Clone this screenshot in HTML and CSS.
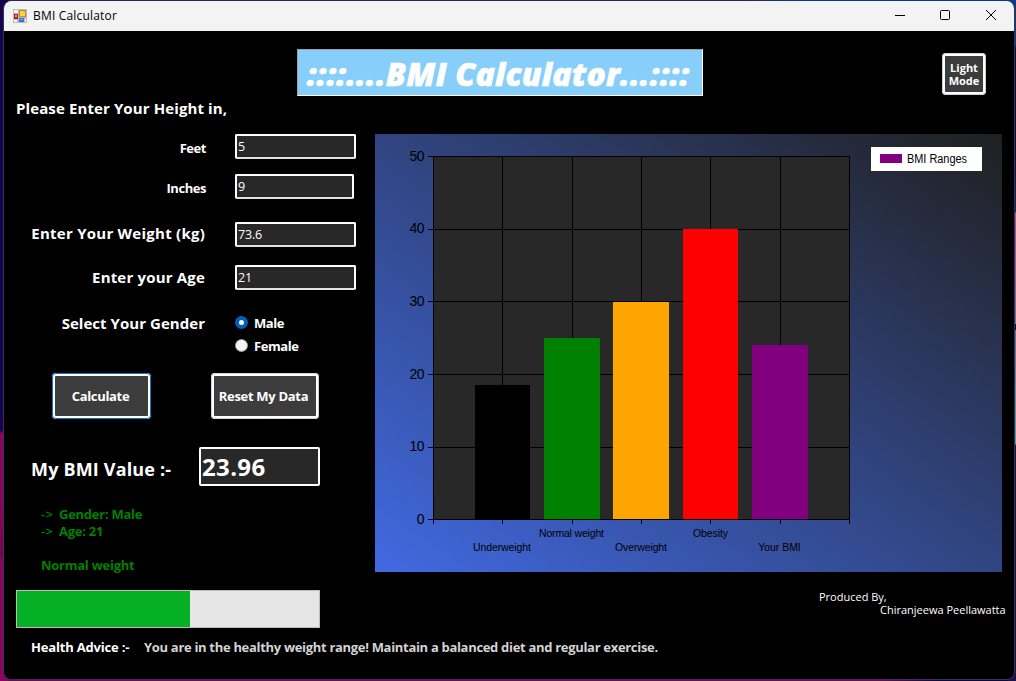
FILE: index.html
```html
<!DOCTYPE html>
<html lang="en">
<head>
<meta charset="utf-8">
<title>BMI Calculator</title>
<link rel="stylesheet" href="styles.css">
</head>
<body>
<div class="window">
  <header class="titlebar">
    <svg class="app-icon" width="14" height="14" viewBox="0 0 14 14">
      <rect width="14" height="14" fill="#b9bcc0"/>
      <path d="M1 1h4v3H1zM1 11h3v2H1zM12 10h1v3h-1z" fill="#f4f4f4"/>
      <rect x="6" y="1" width="7" height="7" fill="#c88a10"/>
      <rect x="7" y="2" width="5" height="5" fill="#fbd04e"/>
      <rect x="1" y="5" width="4" height="5" fill="#b51a14"/>
      <rect x="2" y="6" width="2" height="2" fill="#f0a09a"/>
      <rect x="6" y="9" width="5" height="4" fill="#2e6fd8"/>
      <rect x="7" y="10" width="3" height="1" fill="#7fb0f4"/>
    </svg>
    <span class="caption">BMI Calculator</span>
    <svg class="controls" width="104" height="12" viewBox="0 0 104 12" fill="none" stroke="#000">
      <path d="M0 6.500h10"/>
      <rect x="45.500" y="1.500" width="9" height="9" rx="1"/>
      <path d="M91 1l10 10M101 1l-10 10"/>
    </svg>
  </header>
  <main class="client">
    <section class="top">
      <h1 class="banner"><span>::::....BMI Calculator...::::</span></h1>
      <button class="btn btn-mode">Light<br>Mode</button>
    </section>
    <p class="intro label"><span>Please Enter Your Height in,</span></p>
    <div class="body">
      <section class="form">
        <div class="row row-feet"><label class="small">Feet</label><input class="field" value="5"></div>
        <div class="row row-inches"><label class="small">Inches</label><input class="field field-inches" value="9"></div>
        <div class="row row-weight"><label class="label">Enter Your Weight (kg)</label><input class="field" value="73.6"></div>
        <div class="row row-age"><label class="label">Enter your Age</label><input class="field" value="21"></div>
        <div class="row row-gender">
          <span class="label">Select Your Gender</span>
          <div class="radios">
            <div class="radio"><i class="dot dot-on"></i><span>Male</span></div>
            <div class="radio"><i class="dot"></i><span>Female</span></div>
          </div>
        </div>
        <div class="actions">
          <button class="btn btn-calc">Calculate</button>
          <button class="btn btn-reset">Reset My Data</button>
        </div>
        <div class="result"><span class="result-label">My BMI Value :-</span><input class="result-field" value="23.96"></div>
        <div class="summary"><span class="arrow">-&gt;</span>Gender: Male<br><span class="arrow">-&gt;</span>Age: 21<br><br>Normal weight</div>
        <div class="progress"><div class="progress-bar"></div></div>
      </section>
      <section class="side">
        <svg class="chart" width="627" height="438" viewBox="0 0 627 438">
          <defs>
            <linearGradient id="bg" gradientUnits="userSpaceOnUse" x1="108" y1="513" x2="519" y2="-75">
              <stop offset="0" stop-color="#4169e1"/><stop offset="1" stop-color="#202020"/>
            </linearGradient>
          </defs>
          <rect width="627" height="438" fill="url(#bg)"/>
          <rect x="58" y="22" width="417" height="364" fill="#282828"/>
          <path class="grid" d="M53 22.500H475M53 95.500H475M53 167.500H475M53 240.500H475M53 313.500H475M53 385.500H475M58.500 22V390M127.500 22V390M197.500 22V390M266.500 22V390M335.500 22V390M405.500 22V390M474.500 22V390"/>
          <rect x="100" y="251" width="55" height="134" fill="#000"/>
          <rect x="169" y="204" width="56" height="181" fill="#008000"/>
          <rect x="238" y="168" width="56" height="217" fill="#ffa500"/>
          <rect x="308" y="95" width="55" height="290" fill="#f00"/>
          <rect x="377" y="211" width="56" height="174" fill="#800080"/>
          <g class="ticks">
            <text x="49.500" y="27" textLength="15">50</text><text x="49.500" y="99" textLength="15">40</text><text x="49.500" y="172" textLength="15">30</text>
            <text x="49.500" y="245" textLength="15">20</text><text x="49.500" y="317" textLength="15">10</text><text x="49.500" y="390">0</text>
          </g>
          <g class="cats">
            <text x="127" y="417" textLength="58">Underweight</text>
            <text x="196.500" y="403" textLength="65">Normal weight</text>
            <text x="266" y="417" textLength="52">Overweight</text>
            <text x="335.500" y="403" textLength="35">Obesity</text>
            <text x="404.500" y="417" textLength="42.500">Your BMI</text>
          </g>
          <rect x="496" y="13" width="111" height="24" fill="#fff"/>
          <rect x="505" y="20" width="22" height="9" fill="#800080"/>
          <text class="legend" x="532" y="29" textLength="60" lengthAdjust="spacingAndGlyphs">BMI Ranges</text>
        </svg>
        <p class="credit"><span class="credit-a">Produced By,</span><span class="credit-b">Chiranjeewa Peellawatta</span></p>
      </section>
    </div>
    <footer class="advice"><span class="advice-label">Health Advice :-</span><span class="advice-text">You are in the healthy weight range! Maintain a balanced diet and regular exercise.</span></footer>
  </main>
</div>
</body>
</html>
```
FILE: styles.css
```css
* { box-sizing: border-box; }
html, body { margin: 0; height: 100%; overflow: hidden; }
body {
  padding: 1px 2px 1px 3px;
  font-family: "Open Sans", "Noto Sans", sans-serif;
  background:
    linear-gradient(#12044f 0 430px, #8d045f 434px 500px, #77054f 555px, #8d045f 560px) left / 8px 100% no-repeat,
    linear-gradient(#073b87 0 45px, #0a0a4c 48px 150px, #0d2a66 212px, #b84a9c 213px, #7d68a0 324px, #140840 324px 330px, #6f68a0 330px, #4aa0a8 444px, #1c0f50 445px) right / 8px 100% no-repeat,
    linear-gradient(90deg, #2d2060 0 740px, #0a3c86 800px) top / 100% 8px no-repeat,
    linear-gradient(90deg, #7a0455 0 880px, #10044a 940px) bottom / 100% 8px no-repeat;
}
.window {
  width: 1012px; height: 679px; background: #000;
  border: 1px solid #3a3350; border-top: 0; border-radius: 8px; overflow: hidden;
}
.titlebar { height: 30px; background: #f3f3f3; display: flex; align-items: center; padding-left: 9px; }
.caption { font-size: 12px; color: #000; margin: -2px 0 0 6px; flex: 1; letter-spacing: .18px; }
.controls { margin: -2px 15px 0 0; }
.client { color: #fff; }
.top { display: flex; padding: 18px 0 0 293px; height: 66px; }
h1.banner {
  margin: 0; width: 406px; height: 47px; background: #87cefa; border: 1px solid #a0a0a0;
  border-right-color: #fff; border-bottom-color: #fff; display: flex; justify-content: center; align-items: center;
  padding: 3px 4px 0 0; font-size: 32px; line-height: 40px; font-weight: 800; font-style: italic; white-space: nowrap;
  letter-spacing: .1px; -webkit-text-stroke: .5px #fff;
}
.btn {
  font: bold 13px/16px "Open Sans", sans-serif; letter-spacing: -.33px; color: #fff; background: #3c3c3c; white-space: nowrap;
  border: 3px solid #fff; outline: 1px solid #d0d0d0; outline-offset: -1px; border-radius: 4px; padding: 0; text-align: center;
}
.btn-mode { width: 44px; height: 42px; margin: 4px 0 0 239px; font-size: 11px; line-height: 13px; letter-spacing: 0; }
.label { font-size: 15px; font-weight: 700; line-height: 20px; white-space: nowrap; letter-spacing: .11px; }
.intro { margin: 0; padding: 1px 0 0 12px; height: 37px; }
.body { display: flex; height: 496px; }
.form { width: 371px; }
.row { display: grid; grid-template-columns: 202px 1fr; column-gap: 29px; align-items: start; }
.row > :first-child { text-align: right; }
.small { font-size: 13px; font-weight: 700; line-height: 18px; padding-top: 5px; letter-spacing: -.45px; }
.row-feet { height: 40px; }
.row-inches { height: 48px; }
.row-weight { height: 43px; }
.row-age { height: 49px; }
.row-weight .label { padding: 1px 1px 0 0; letter-spacing: .25px; }
.row-age .label { padding: 2px 1px 0 0; letter-spacing: .18px; }
.row-gender .label { margin-top: -1px; padding-right: 1px; letter-spacing: .04px; }
.field {
  width: 121px; height: 25px; border: 2px solid #fff; border-bottom-color: #e2e2e2; border-radius: 2px; background: #282828; color: #fff;
  padding: 0 1px 1px; font: 12.5px/18px "Open Sans", sans-serif; letter-spacing: -.2px; outline: 0;
}
.field-inches { width: 119px; }
.row-gender { height: 59px; }
.radios { display: grid; row-gap: 5px; font-size: 13px; font-weight: 700; line-height: 18px; letter-spacing: -.42px; }
.radio { display: flex; align-items: center; gap: 6px; }
.dot { width: 13px; height: 13px; margin-top: -1px; border-radius: 50%; background: #f3f3f3; border: 1px solid #999; }
.dot-on { border: 4px solid #005fb8; background: #fff; }
.actions { display: flex; padding-left: 48px; gap: 60px; height: 74px; }
.btn-calc { width: 99px; height: 46px; outline-color: #0078d4; padding-right: 2px; }
.btn-reset { width: 108px; height: 46px; letter-spacing: -.3px; padding-right: 3px; }
.result { display: flex; padding-left: 27px; height: 59px; }
.result-label { width: 168px; font-size: 18px; font-weight: 700; line-height: 26px; padding-top: 9px; white-space: nowrap; letter-spacing: .17px; }
.result-field {
  width: 121px; height: 39px; border: 2px solid #fff; border-radius: 2px; background: #282828; color: #fff;
  font: bold 24px/32px "Open Sans", sans-serif; letter-spacing: .35px; padding: 0 1px; outline: 0;
}
.summary { padding-left: 37px; font-size: 13px; font-weight: 700; line-height: 17px; letter-spacing: -.26px; color: #008000; height: 84px; }
.arrow { display: inline-block; width: 18px; font-weight: 600; letter-spacing: .4px; }
.progress { margin-left: 12px; width: 304px; height: 38px; background: #e6e6e6; border: 1px solid #bcbcbc; }
.progress-bar { width: 173px; height: 36px; background: #06b025; }
.chart { display: block; }
.grid { stroke: #000; fill: none; }
.ticks { font: 14px "Liberation Sans", sans-serif; text-anchor: end; }
.cats { font: 10.5px "Liberation Sans", sans-serif; text-anchor: middle; }
.legend { font: 12px "Liberation Sans", sans-serif; }
.credit { margin: 0; padding: 18px 0 0 444px; font-size: 11px; line-height: 13px; display: grid; white-space: nowrap; }
.credit-b { padding-left: 61px; }
.advice { display: flex; padding: 8px 0 0 27px; font-size: 13px; font-weight: 700; line-height: 18px; white-space: nowrap; }
.advice-label { width: 113px; letter-spacing: -.18px; }
.advice-text { color: #d3d3d3; letter-spacing: -.31px; }
```
